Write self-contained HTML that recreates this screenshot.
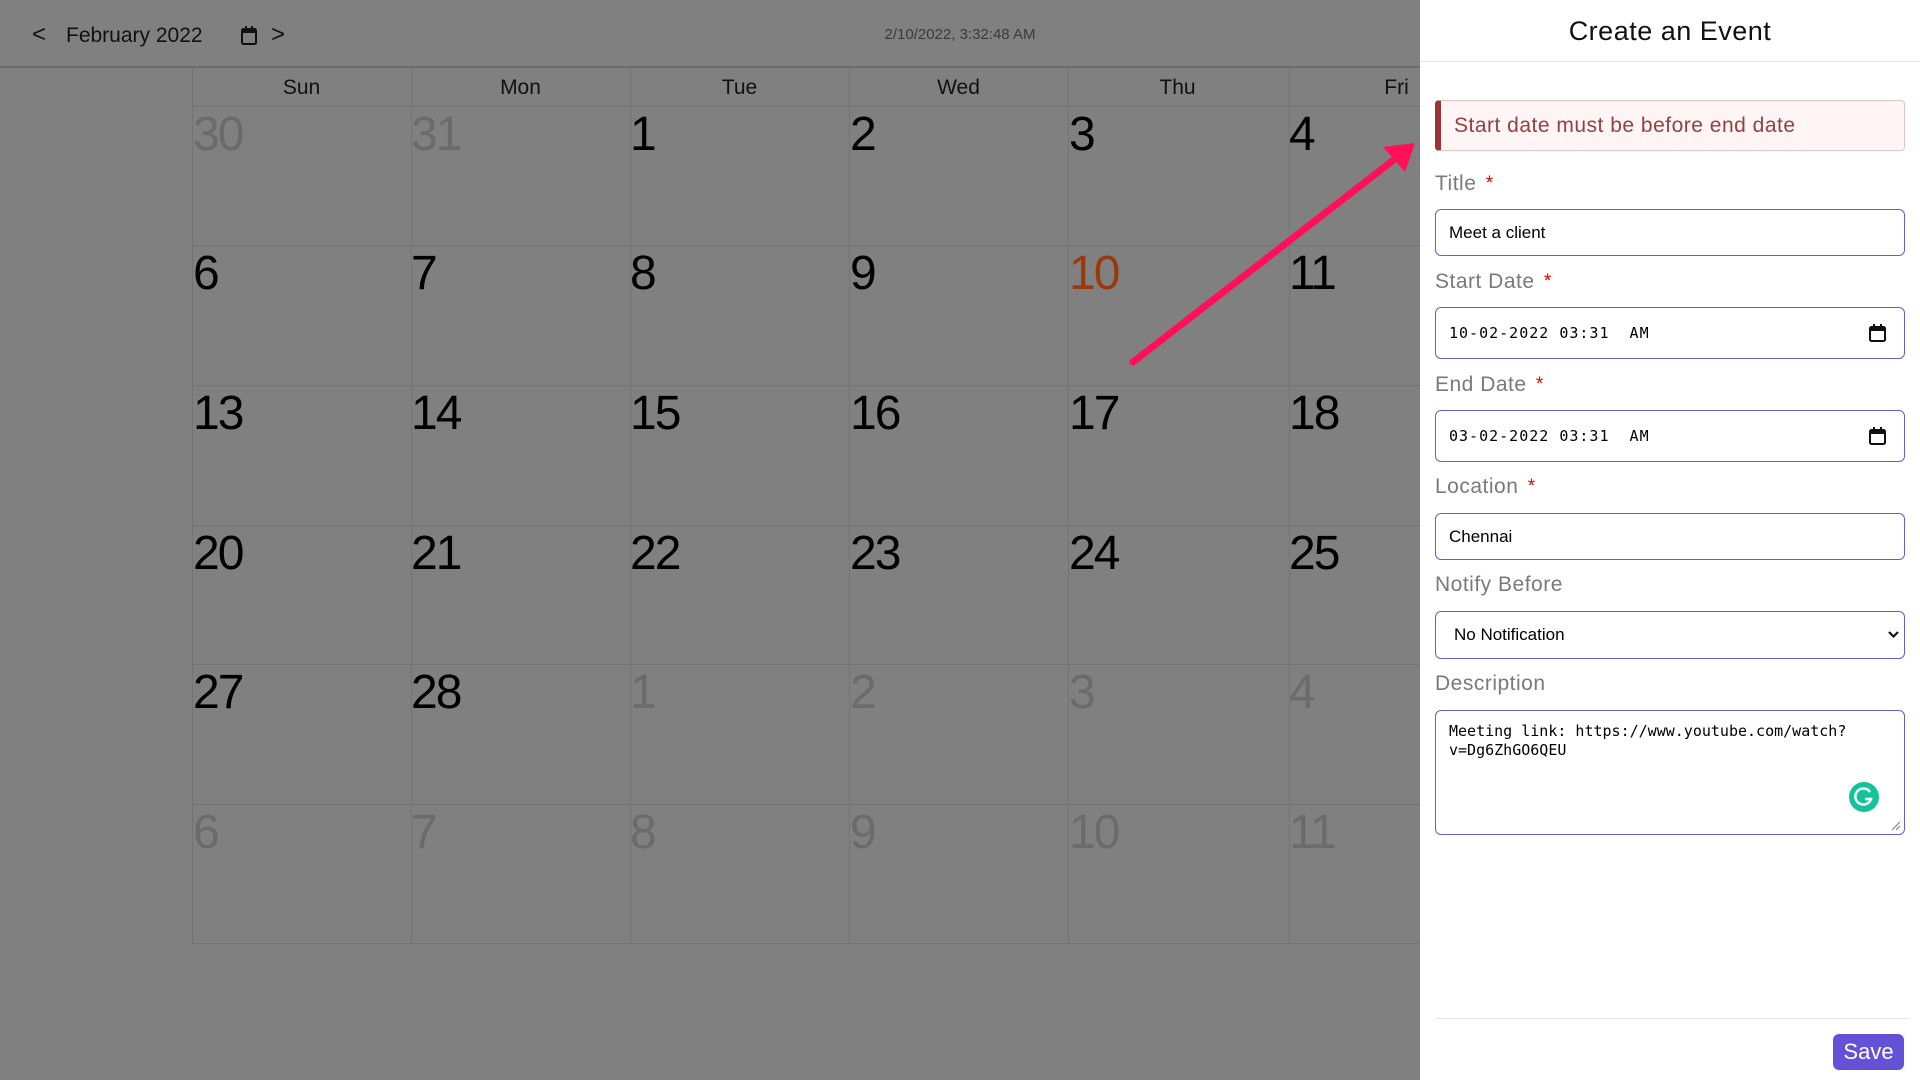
<!DOCTYPE html>
<html><head><meta charset="utf-8"><style>
*{box-sizing:border-box;margin:0;padding:0}
body{width:1920px;height:1080px;overflow:hidden;background:#808080;font-family:"Liberation Sans",sans-serif;position:relative}
.abs{position:absolute}
.hdr{left:0;top:0;width:1420px;height:68px;border-bottom:2px solid #6c6c6c}
.dn{position:absolute;top:76px;width:219px;text-align:center;font-size:21px;color:#111}
.num{position:absolute;font-size:48px;color:#000;letter-spacing:-2px}
.vl{position:absolute;top:68px;width:1px;height:876px;background:#747474}
.hl{position:absolute;left:192px;width:1228px;height:1px;background:#747474}
.panel{left:1420px;top:0;width:500px;height:1080px;background:#fff}
.lbl{position:absolute;left:15px;font-size:21px;color:#7a7a7a;letter-spacing:.5px}
.lbl b{color:#e00;font-weight:normal;font-size:19px;position:relative;top:-1px;margin-left:3px}
.inp{position:absolute;left:15px;width:470px;border:1.5px solid #6a5ad5;border-radius:6px;font-size:17px;color:#000;padding-left:13px;display:flex;align-items:center}
.mono{font-family:"DejaVu Sans Mono","Liberation Mono",monospace;font-size:15px}
</style></head><body>
<div class="abs hdr"></div>
<div class="abs" style="left:32px;top:21px;font-size:24px;color:#111">&lt;</div>
<div class="abs" style="left:66px;top:24px;font-size:21px;color:#111">February 2022</div>
<svg class="abs" style="left:240px;top:26px" width="18" height="20" viewBox="0 0 18 20"><rect x="2" y="3" width="14" height="15" rx="1.5" fill="none" stroke="#111" stroke-width="2"/><rect x="2" y="3" width="14" height="4" fill="#111"/><rect x="5" y="0" width="2" height="4" fill="#111"/><rect x="11" y="0" width="2" height="4" fill="#111"/></svg>
<div class="abs" style="left:271px;top:21px;font-size:24px;color:#111">&gt;</div>
<div class="abs" style="left:860px;top:26px;width:200px;text-align:center;font-size:15px;color:#3a3a3a">2/10/2022, 3:32:48 AM</div>

<div class="vl" style="left:192px"></div><div class="vl" style="left:411px"></div><div class="vl" style="left:630px"></div><div class="vl" style="left:849px"></div><div class="vl" style="left:1068px"></div><div class="vl" style="left:1289px"></div>
<div class="hl" style="top:106px"></div><div class="hl" style="top:245px"></div><div class="hl" style="top:385px"></div><div class="hl" style="top:525px"></div><div class="hl" style="top:664px"></div><div class="hl" style="top:804px"></div><div class="hl" style="top:943px"></div>

<div class="dn" style="left:192px">Sun</div><div class="dn" style="left:411px">Mon</div><div class="dn" style="left:630px">Tue</div><div class="dn" style="left:849px">Wed</div><div class="dn" style="left:1068px">Thu</div><div class="dn" style="left:1287px">Fri</div>

<div id="nums"></div>
<script>
var rows=[[30,31,1,2,3,4],[6,7,8,9,10,11],[13,14,15,16,17,18],[20,21,22,23,24,25],[27,28,1,2,3,4],[6,7,8,9,10,11]];
var xs=[193,411,630,850,1069,1289],ys=[106,245,385,525,664,804],h="";
rows.forEach(function(r,i){r.forEach(function(n,j){var c="#000";if((i==0&&j<2)||(i==4&&j>1)||i==5)c="#6b6b6b";if(i==1&&j==4)c="#9a3a0c";h+='<div class="num" style="left:'+xs[j]+'px;top:'+(ys[i]+1)+'px;color:'+c+'">'+n+'</div>';});});
document.getElementById("nums").innerHTML=h;
</script>

<svg class="abs" style="left:0;top:0" width="1420" height="1080"><line x1="1133" y1="362" x2="1400" y2="155" stroke="#ff1058" stroke-width="7" stroke-linecap="round"/><polygon points="1415,143 1383,147 1405,172" fill="#ff1058"/></svg>

<div class="abs panel">
<div class="abs" style="left:0;top:16px;width:500px;text-align:center;font-size:27px;color:#111;letter-spacing:.5px">Create an Event</div>
<div class="abs" style="left:0;top:61px;width:500px;height:1px;background:#e6e6e6"></div>
<div class="abs" style="left:15px;top:100px;width:470px;height:51px;background:#fff5f5;border:1px solid #e8c4c4;border-left:6px solid #9b3535;border-radius:4px;font-size:21px;color:#944040;padding:13px 0 0 13px;letter-spacing:.5px">Start date must be before end date</div>
<div class="lbl" style="top:172px">Title <b>*</b></div>
<div class="inp" style="top:209px;height:47px">Meet a client</div>
<div class="lbl" style="top:270px">Start Date <b>*</b></div>
<div class="inp mono" style="top:307px;height:52px;letter-spacing:1px">10-02-2022&nbsp;03:31&nbsp;&nbsp;AM</div>
<div class="lbl" style="top:373px">End Date <b>*</b></div>
<div class="inp mono" style="top:410px;height:52px;letter-spacing:1px">03-02-2022&nbsp;03:31&nbsp;&nbsp;AM</div>
<svg class="abs" style="left:449px;top:324px" width="17" height="18" viewBox="0 0 17 18"><rect x="1" y="3" width="15" height="14" rx="1.5" fill="none" stroke="#111" stroke-width="2"/><rect x="1" y="3" width="15" height="4" fill="#111"/><rect x="4" y="0" width="2" height="4" fill="#111"/><rect x="11" y="0" width="2" height="4" fill="#111"/></svg>
<svg class="abs" style="left:449px;top:427px" width="17" height="18" viewBox="0 0 17 18"><rect x="1" y="3" width="15" height="14" rx="1.5" fill="none" stroke="#111" stroke-width="2"/><rect x="1" y="3" width="15" height="4" fill="#111"/><rect x="4" y="0" width="2" height="4" fill="#111"/><rect x="11" y="0" width="2" height="4" fill="#111"/></svg>
<div class="lbl" style="top:475px">Location <b>*</b></div>
<div class="inp" style="top:513px;height:47px">Chennai</div>
<div class="lbl" style="top:573px">Notify Before</div>
<div class="inp" style="top:611px;height:48px;padding-left:18px">No Notification</div>
<svg class="abs" style="left:467px;top:630px" width="13" height="9" viewBox="0 0 13 9"><path d="M2 2 L6.5 6.5 L11 2" fill="none" stroke="#111" stroke-width="2.2"/></svg>
<div class="lbl" style="top:672px">Description</div>
<div class="inp mono" style="top:710px;height:125px;align-items:flex-start;padding-top:11px;line-height:19px;font-size:15px">Meeting link: https://www.youtube.com/watch?<br>v=Dg6ZhGO6QEU</div>
<div class="abs" style="left:429px;top:782px;width:30px;height:30px;border-radius:50%;background:#15c39a"></div>
<svg class="abs" style="left:429px;top:782px" width="30" height="30" viewBox="0 0 30 30"><path d="M21 10 A8 8 0 1 0 22 17 L16 17" fill="none" stroke="#fff" stroke-width="2.5"/></svg>
<svg class="abs" style="left:471px;top:821px" width="10" height="10" viewBox="0 0 10 10"><path d="M1 9 L9 1 M5 9 L9 5" stroke="#777" stroke-width="1"/></svg>
<div class="abs" style="left:15px;top:1018px;width:475px;height:1px;background:#e6e6e6"></div>
<div class="abs" style="left:413px;top:1034px;width:71px;height:36px;background:#6352d8;border-radius:6px;color:#fff;font-size:22px;text-align:center;line-height:36px">Save</div>
</div>
</body></html>
